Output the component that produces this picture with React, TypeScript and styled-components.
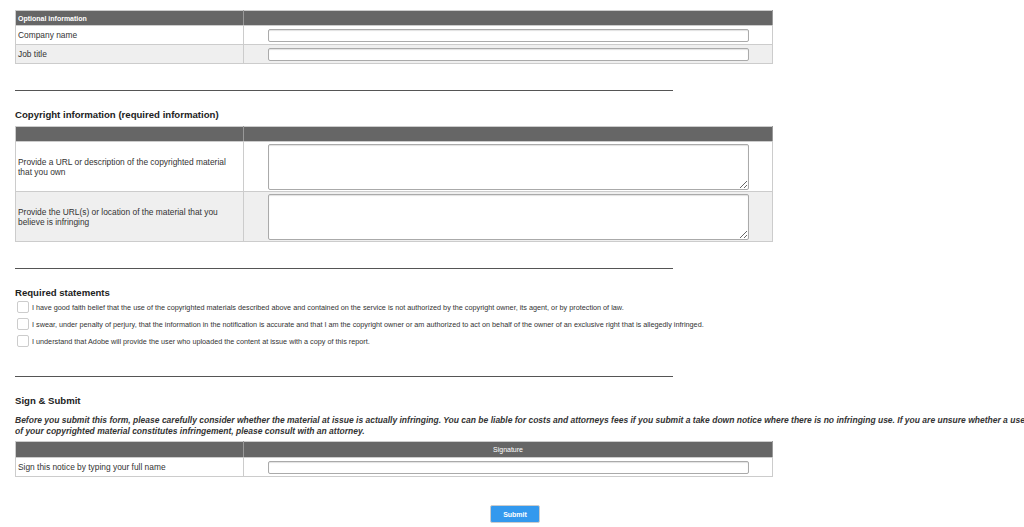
import styled, { createGlobalStyle } from "styled-components"

const GlobalStyle = createGlobalStyle`
  html, body {
    margin: 0;
    padding: 0;
    background: #fff;
    overflow: hidden;
  }
  body {
    font-family: "Liberation Sans", Arial, Helvetica, sans-serif;
    color: #333;
  }
`

const Page = styled.div`
  width: 1100px;
  padding: 10px 0 0 15px;
`

const FormTable = styled.table`
  width: 758px;
  border-collapse: collapse;
  border: 1px solid #ccc;
  table-layout: fixed;
  font-size: 8.4px;
`

const HeadCell = styled.th<{ $center?: boolean; $h?: number }>`
  background: #666;
  color: #fff;
  height: ${(p) => p.$h ?? 14}px;
  padding: 0 2px;
  font-size: 7px;
  font-weight: ${(p) => (p.$center ? "normal" : "bold")};
  text-align: ${(p) => (p.$center ? "center" : "left")};
  border-right: 1px solid #999;
  border-bottom: 1px solid #ccc;
`

const Row = styled.tr<{ $alt?: boolean }>`
  background: ${(p) => (p.$alt ? "#efefef" : "#fff")};
  border-top: 1px solid #ccc;
`

const LabelCell = styled.td<{ $h: number }>`
  height: ${(p) => p.$h}px;
  padding: 0 2px;
  line-height: 10px;
  border-right: 1px solid #ccc;
  vertical-align: middle;
`

const FieldCell = styled.td`
  padding: 0 24px;
  vertical-align: middle;
`

const TextInput = styled.input`
  display: block;
  box-sizing: border-box;
  width: 481px;
  height: 13px;
  margin: 0;
  border: 1px solid #aaa;
  border-radius: 2px;
  box-shadow: inset 0 1px 1px rgba(0, 0, 0, 0.12);
  background: #fff;
`

const TextArea = styled.textarea`
  display: block;
  box-sizing: border-box;
  width: 481px;
  height: 46px;
  margin: 0;
  border: 1px solid #aaa;
  border-radius: 2px;
  box-shadow: inset 0 1px 1px rgba(0, 0, 0, 0.12);
  background: #fff;
`

const Divider = styled.div<{ $top: number; $bottom: number }>`
  width: 658px;
  height: 0;
  border-bottom: 1px solid #555;
  margin: ${(p) => p.$top}px 0 ${(p) => p.$bottom}px;
`

const Heading = styled.h3`
  margin: 0;
  font-size: 9.6px;
  line-height: 12px;
  font-weight: bold;
  color: #222;
`

const Statements = styled.div`
  display: flex;
  flex-direction: column;
  gap: 5px;
  margin: 2px 0 0 2px;
`

const Statement = styled.label`
  display: flex;
  align-items: center;
  gap: 3px;
  font-size: 7.25px;
  color: #333;
`

const Check = styled.input`
  appearance: none;
  width: 12px;
  height: 12px;
  margin: 0;
  border: 1px solid #ccc;
  border-radius: 2px;
  background: #fff;
`

const Notice = styled.p`
  width: 1012px;
  margin: 8px 0 4px;
  font-size: 8.5px;
  line-height: 11px;
  font-weight: bold;
  font-style: italic;
  color: #333;
`

const Actions = styled.div`
  width: 1000px;
  display: flex;
  justify-content: center;
  padding-top: 28px;
`

const SubmitButton = styled.button`
  width: 50px;
  height: 18px;
  padding: 0;
  background: #3399ee;
  color: #fff;
  border: 1px solid #ccc;
  border-radius: 2px;
  font-family: "Liberation Sans", Arial, sans-serif;
  font-size: 7px;
  font-weight: bold;
`

const statements = [
  "I have good faith belief that the use of the copyrighted materials described above and contained on the service is not authorized by the copyright owner, its agent, or by protection of law.",
  "I swear, under penalty of perjury, that the information in the notification is accurate and that I am the copyright owner or am authorized to act on behalf of the owner of an exclusive right that is allegedly infringed.",
  "I understand that Adobe will provide the user who uploaded the content at issue with a copy of this report.",
]

const App = () => {
  return (
    <>
      <GlobalStyle />
      <Page>
        <FormTable>
          <thead>
            <tr>
              <HeadCell style={{ width: 223 }}>Optional information</HeadCell>
              <HeadCell />
            </tr>
          </thead>
          <tbody>
            <Row>
              <LabelCell $h={18}>Company name</LabelCell>
              <FieldCell><TextInput type="text" /></FieldCell>
            </Row>
            <Row $alt>
              <LabelCell $h={18}>Job title</LabelCell>
              <FieldCell><TextInput type="text" /></FieldCell>
            </Row>
          </tbody>
        </FormTable>

        <Divider $top={26} $bottom={18} />
        <Heading>Copyright information (required information)</Heading>

        <FormTable style={{ marginTop: 5 }}>
          <thead>
            <tr>
              <HeadCell style={{ width: 223 }} />
              <HeadCell />
            </tr>
          </thead>
          <tbody>
            <Row>
              <LabelCell $h={49}>Provide a URL or description of the copyrighted material<br />that you own</LabelCell>
              <FieldCell><TextArea /></FieldCell>
            </Row>
            <Row $alt>
              <LabelCell $h={49}>Provide the URL(s) or location of the material that you<br />believe is infringing</LabelCell>
              <FieldCell><TextArea /></FieldCell>
            </Row>
          </tbody>
        </FormTable>

        <Divider $top={26} $bottom={18} />
        <Heading>Required statements</Heading>
        <Statements>
          {statements.map((s) => (
            <Statement key={s}>
              <Check type="checkbox" />
              {s}
            </Statement>
          ))}
        </Statements>

        <Divider $top={29} $bottom={18} />
        <Heading>Sign &amp; Submit</Heading>
        <Notice>
          Before you submit this form, please carefully consider whether the material at issue is actually infringing. You can be liable for costs and attorneys fees if you submit a take down notice where there is no infringing use. If you are unsure whether a use of your copyrighted material constitutes infringement, please consult with an attorney.
        </Notice>

        <FormTable>
          <thead>
            <tr>
              <HeadCell $h={15} style={{ width: 223 }} />
              <HeadCell $h={15} $center>Signature</HeadCell>
            </tr>
          </thead>
          <tbody>
            <Row>
              <LabelCell $h={18}>Sign this notice by typing your full name</LabelCell>
              <FieldCell><TextInput type="text" /></FieldCell>
            </Row>
          </tbody>
        </FormTable>

        <Actions>
          <SubmitButton type="submit">Submit</SubmitButton>
        </Actions>
      </Page>
    </>
  )
}

export default App
